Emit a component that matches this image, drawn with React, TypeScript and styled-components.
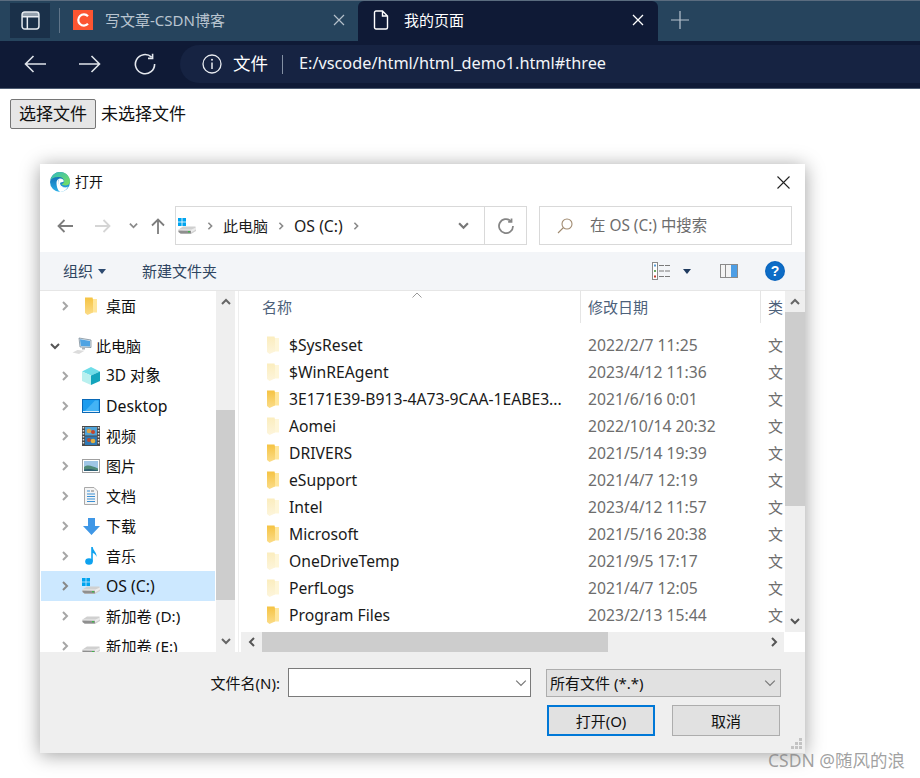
import React from "react";
import styled, { createGlobalStyle } from "styled-components";

const FONT = '"Noto Sans", "Noto Sans CJK SC", sans-serif';

const Global = createGlobalStyle`
  html, body { margin: 0; padding: 0; background: #fff; }
  body { font-family: ${FONT}; overflow: hidden; }
  svg { flex: none; }
`;

const Page = styled.div`
  position: relative;
  width: 920px;
  height: 778px;
  overflow: hidden;
  background: #fff;
`;

/* A fixed line box keeps mixed Latin and CJK labels on one baseline. */
const Label = styled.span<{ $size?: number }>`
  display: block;
  line-height: 20px;
  white-space: nowrap;
  ${(p) => (p.$size ? `font-size: ${p.$size}px;` : "")}
`;

/* ---------- browser chrome ---------- */
const TabStrip = styled.div`
  display: flex;
  align-items: stretch;
  height: 40px;
  background: #26445d;
  border-top: 1px solid #5a6c7f;
`;
const SideToggle = styled.div`
  display: flex;
  align-items: center;
  justify-content: center;
  width: 40px;
  height: 35px;
  margin: 2px 0 0 10px;
  background: #1a3049;
`;
const StripDivider = styled.div`
  width: 1px;
  height: 25px;
  margin: 7px 13px 0 9px;
  background: #5f7488;
`;
const Tab = styled.div<{ $active?: boolean }>`
  display: flex;
  align-items: center;
  box-sizing: border-box;
  width: ${(p) => (p.$active ? "300px" : "285px")};
  padding-left: ${(p) => (p.$active ? "15px" : "0")};
  padding-right: ${(p) => (p.$active ? "14px" : "13px")};
  padding-bottom: 2px;
  background: ${(p) => (p.$active ? "#0f1a36" : "transparent")};
  border-radius: ${(p) => (p.$active ? "6px 6px 0 0" : "0")};
  color: ${(p) => (p.$active ? "#ffffff" : "#b9c5d0")};
  font-size: 15px;
`;
const TabTitle = styled.span`
  flex: 1;
  margin-left: 12px;
  line-height: 20px;
  white-space: nowrap;
`;
const ActiveTitle = styled(TabTitle)`
  margin-left: 15px;
`;
const Favicon = styled.div`
  display: flex;
  align-items: center;
  justify-content: center;
  width: 20px;
  height: 20px;
  background: #fc5531;
`;
const NewTab = styled.div`
  display: flex;
  align-items: center;
  margin-left: 13px;
  padding-bottom: 2px;
`;
const BrowserBar = styled.div`
  display: flex;
  align-items: center;
  box-sizing: border-box;
  height: 48px;
  padding-bottom: 1px;
  background: #0f1a36;
  border-bottom: 1px solid #4d5c72;
`;
const NavButton = styled.div<{ $w: number }>`
  display: flex;
  align-items: center;
  justify-content: center;
  width: ${(p) => p.$w}px;
  margin-bottom: 1px;
`;
const AddressPill = styled.div`
  display: flex;
  align-items: center;
  flex: 1;
  height: 38px;
  padding-left: 22px;
  background: #162342;
  border-radius: 19px 0 0 19px;
  color: #fff;
`;
const SchemeLabel = styled.span`
  margin-left: 11px;
  padding-bottom: 2px;
  font-size: 17.5px;
  line-height: 24px;
`;
const PillDivider = styled.div`
  width: 1px;
  height: 19px;
  margin: 0 16px 0 14px;
  background: #8390a3;
`;
const UrlText = styled.span`
  padding-bottom: 2px;
  font-size: 16.3px;
  line-height: 24px;
  white-space: nowrap;
  color: #f2f5f9;
`;

/* ---------- page content ---------- */
const FileRow = styled.div`
  display: flex;
  align-items: center;
  padding: 10px 0 0 10px;
  height: 30px;
`;
const ChooseButton = styled.div`
  display: flex;
  align-items: center;
  justify-content: center;
  box-sizing: border-box;
  width: 86px;
  height: 30px;
  padding-bottom: 3px;
  background: #e6e6e6;
  border: 1px solid #767676;
  border-radius: 2px;
  font-size: 17px;
  color: #111;
`;
const NoFile = styled.span`
  margin-left: 5px;
  padding-bottom: 3px;
  font-size: 17px;
  color: #111;
`;

/* ---------- dialog ---------- */
const Dialog = styled.div`
  position: relative;
  width: 765px;
  height: 589px;
  margin: 35px 0 0 40px;
  display: flex;
  flex-direction: column;
  background: #fff;
  box-shadow: 0 2px 18px rgba(0, 0, 0, 0.38);
  overflow: hidden;
`;
const TitleBar = styled.div`
  display: flex;
  align-items: center;
  height: 36px;
  padding: 0 15px 0 10px;
  flex: none;
`;
const TitleText = styled(Label)`
  flex: 1;
  margin-left: 5px;
  font-size: 14px;
  color: #111;
`;
const NavRow = styled.div`
  display: flex;
  align-items: center;
  height: 39px;
  margin: 6px 0 7px;
  flex: none;
`;
const NavIcon = styled.div<{ $w: number }>`
  display: flex;
  align-items: center;
  justify-content: center;
  width: ${(p) => p.$w}px;
`;
const NavIcons = styled.div`
  display: flex;
  align-items: center;
  width: 135px;
  padding-left: 6px;
  box-sizing: border-box;
`;
const Breadcrumb = styled.div`
  display: flex;
  align-items: center;
  box-sizing: border-box;
  width: 352px;
  height: 39px;
  border: 1px solid #d9d9d9;
  font-size: 15px;
  color: #1c1c1c;
`;
const CrumbTrail = styled.div`
  display: flex;
  align-items: center;
  flex: 1;
  padding-left: 1px;
  gap: 9px;
`;
const CrumbDrop = styled.div`
  display: flex;
  align-items: center;
  justify-content: center;
  width: 36px;
  padding-right: 6px;
  box-sizing: border-box;
`;
const CrumbRefresh = styled.div`
  display: flex;
  align-items: center;
  justify-content: center;
  box-sizing: border-box;
  width: 42px;
  height: 100%;
  border-left: 1px solid #d9d9d9;
`;
const SearchBox = styled.div`
  display: flex;
  align-items: center;
  box-sizing: border-box;
  width: 253px;
  height: 39px;
  margin-left: 12px;
  padding-left: 17px;
  border: 1px solid #d9d9d9;
  font-size: 15.4px;
  color: #6d6d6d;
  gap: 17px;
`;
const CommandBar = styled.div`
  display: flex;
  align-items: center;
  height: 38px;
  padding: 0 11px 0 23px;
  background: #f3f5f8;
  border-bottom: 1px solid #e6e6e6;
  font-size: 15px;
  color: #2f4561;
  flex: none;
`;
const Organize = styled.div`
  display: flex;
  align-items: center;
  gap: 5px;
`;
const NewFolder = styled(Label)`
  flex: 1;
  margin-left: 36px;
`;
const CommandIcons = styled.div`
  display: flex;
  align-items: center;
`;

const Body = styled.div`
  display: flex;
  height: 361px;
  flex: none;
`;
const Tree = styled.div`
  width: 176px;
  overflow: hidden;
  padding: 0 1px;
  box-sizing: border-box;
`;
const TreeRow = styled.div<{ $selected?: boolean; $gap?: boolean }>`
  display: flex;
  align-items: center;
  height: 30px;
  margin-top: ${(p) => (p.$gap ? "10px" : "0")};
  background: ${(p) => (p.$selected ? "#cce8ff" : "transparent")};
  font-size: 15px;
  color: #111;
  white-space: nowrap;
`;
const TreeExpander = styled.div<{ $open?: boolean }>`
  display: flex;
  justify-content: center;
  align-items: center;
  box-sizing: border-box;
  width: ${(p) => (p.$open ? "27px" : "41px")};
  padding-left: ${(p) => (p.$open ? "0" : "7px")};
  flex: none;
`;
const TreeIcon = styled.div<{ $open?: boolean }>`
  display: flex;
  justify-content: center;
  align-items: center;
  width: ${(p) => (p.$open ? "20px" : "18px")};
  margin: ${(p) => (p.$open ? "0 4px" : "0 6px 0 0")};
  flex: none;
`;
const VScroll = styled.div<{ $w: number }>`
  display: flex;
  flex-direction: column;
  width: ${(p) => p.$w}px;
  flex: none;
  background: #efefef;
`;
const ScrollEnd = styled.div<{ $h: number; $nudge?: number }>`
  display: flex;
  align-items: center;
  justify-content: center;
  height: ${(p) => p.$h}px;
  padding-bottom: ${(p) => p.$nudge || 0}px;
  box-sizing: border-box;
  flex: none;
`;
const ScrollThumb = styled.div<{ $h: number; $top: number }>`
  height: ${(p) => p.$h}px;
  margin-top: ${(p) => p.$top}px;
  background: #cdcdcd;
  flex: none;
`;
const ScrollRest = styled.div`
  flex: 1;
`;
const Splitter = styled.div`
  box-sizing: content-box;
  width: 3px;
  margin-right: 2px;
  border-right: 1px solid #eeeeee;
  flex: none;
`;
const Pane = styled.div`
  flex: 1;
  display: flex;
  flex-direction: column;
  min-width: 0;
`;
const PaneMain = styled.div`
  flex: 1;
  display: flex;
  min-height: 0;
`;
const ListArea = styled.div`
  position: relative;
  flex: 1;
  min-width: 0;
  overflow: hidden;
`;
const HeaderRow = styled.div`
  display: flex;
  height: 32px;
  margin-bottom: 9px;
  font-size: 15px;
  color: #4d617a;
`;
const HeaderCell = styled.div<{ $w: number; $sep?: boolean }>`
  display: flex;
  align-items: center;
  box-sizing: border-box;
  width: ${(p) => p.$w}px;
  flex: none;
  padding-left: ${(p) => (p.$sep ? "7px" : "21px")};
  border-right: 1px solid #e5e5e5;
  white-space: nowrap;
`;
const TypeCell = styled.div`
  display: flex;
  align-items: center;
  flex: 1;
  padding-left: 7px;
`;
const SortCaret = styled.div`
  position: absolute;
  left: 171px;
  top: 1px;
  line-height: 0;
`;
const FileLine = styled.div`
  display: flex;
  align-items: center;
  box-sizing: border-box;
  height: 27px;
  padding-bottom: 2px;
  font-size: 15.7px;
  white-space: nowrap;
`;
const FileIconCell = styled.div`
  display: flex;
  align-items: center;
  width: 48px;
  padding-left: 26px;
  box-sizing: border-box;
  flex: none;
`;
const FileName = styled.div`
  width: 299px;
  flex: none;
  color: #1a1a1a;
`;
const FileDate = styled.div`
  width: 180px;
  flex: none;
  color: #6d6d6d;
`;
const FileType = styled.div`
  font-size: 15px;
  color: #6d6d6d;
`;
const HScroll = styled.div`
  display: flex;
  height: 20px;
  flex: none;
`;
const HTrack = styled.div`
  flex: 1;
  display: flex;
  align-items: stretch;
  background: #efefef;
`;
const HEnd = styled.div`
  display: flex;
  align-items: center;
  justify-content: center;
  width: 21px;
  flex: none;
`;
const HThumb = styled.div`
  width: 346px;
  background: #cdcdcd;
`;
const HRest = styled.div`
  flex: 1;
`;
const Corner = styled.div`
  width: 21px;
  flex: none;
`;

const Footer = styled.div`
  flex: 1;
  background: #efefef;
  padding-top: 16px;
  font-size: 15px;
  color: #111;
`;
const FooterLine = styled.div`
  display: flex;
  align-items: center;
  height: 29px;
`;
const NameLabel = styled(Label)`
  width: 240px;
  text-align: right;
  flex: none;
`;
const NameInput = styled.div`
  display: flex;
  align-items: center;
  justify-content: flex-end;
  box-sizing: border-box;
  width: 243px;
  height: 29px;
  margin-left: 8px;
  padding-right: 3px;
  background: #fff;
  border: 1px solid #7a7a7a;
  flex: none;
`;
const TypeSelect = styled.div`
  display: flex;
  align-items: center;
  justify-content: space-between;
  box-sizing: border-box;
  width: 235px;
  height: 28px;
  margin-left: 15px;
  padding: 0 4px 0 3px;
  background: #e1e1e1;
  border: 1px solid #adadad;
  flex: none;
`;
const ButtonLine = styled.div`
  display: flex;
  margin: 8px 0 0 507px;
  gap: 17px;
`;
const DialogButton = styled.div<{ $primary?: boolean }>`
  display: flex;
  align-items: center;
  justify-content: center;
  box-sizing: border-box;
  width: 108px;
  height: 31px;
  background: #e1e1e1;
  border: ${(p) => (p.$primary ? "2px solid #0078d7" : "1px solid #adadad")};
`;
const Grip = styled.div`
  position: absolute;
  right: 2px;
  bottom: 3px;
  line-height: 0;
`;
const Watermark = styled.div`
  position: absolute;
  right: 15px;
  bottom: 6px;
  font-size: 17.5px;
  line-height: 24px;
  color: rgba(125, 125, 125, 0.72);
  white-space: nowrap;
`;

/* ---------- icons ---------- */
const Chevron = ({ dir = "right", c = "#a6a6a6", s = 10, w = 2 }: { dir?: string; c?: string; s?: number; w?: number }) => {
  const d: Record<string, string> = {
    right: "M3 1 L7 5 L3 9",
    left: "M7 1 L3 5 L7 9",
    down: "M1 3 L5 7 L9 3",
    up: "M1 7 L5 3 L9 7",
  };
  return (
    <svg width={s} height={s} viewBox="0 0 10 10">
      <path d={d[dir]} fill="none" stroke={c} strokeWidth={w} />
    </svg>
  );
};
const Line = ({ w, h, d, c, sw = 1.6 }: { w: number; h: number; d: string; c: string; sw?: number }) => (
  <svg width={w} height={h} viewBox={`0 0 ${w} ${h}`}>
    <path d={d} fill="none" stroke={c} strokeWidth={sw} />
  </svg>
);
const PanelIcon = () => (
  <svg width="19" height="19" viewBox="0 0 18 18">
    <rect x="1" y="1" width="16" height="16" rx="2.5" fill="none" stroke="#e7ecf1" strokeWidth="1.4" />
    <path d="M1 5.5H17M6 5.5V17" fill="none" stroke="#e7ecf1" strokeWidth="1.4" />
    <rect x="1" y="1" width="16" height="4.5" fill="#e7ecf1" opacity=".6" />
  </svg>
);
const DocIcon = () => (
  <svg width="16" height="20" viewBox="0 0 16 20">
    <path d="M1.5 2.5a1.5 1.5 0 0 1 1.5-1.5h6.5l5 5v11.5a1.5 1.5 0 0 1-1.5 1.5H3a1.5 1.5 0 0 1-1.5-1.5zM9.5 1v5h5" fill="none" stroke="#fff" strokeWidth="1.4" />
  </svg>
);
const ReloadIcon = ({ s = 22, c = "#e4e8ee", w = 1.6 }: { s?: number; c?: string; w?: number }) => (
  <svg width={s} height={s} viewBox="0 0 22 22">
    <path d="M17.6 4.2A9.6 9.6 0 1 0 20.6 11" fill="none" stroke={c} strokeWidth={w} />
    <path d="M18.6 0.8V5.4H14" fill="none" stroke={c} strokeWidth={w} />
  </svg>
);
const InfoIcon = () => (
  <svg width="20" height="20" viewBox="0 0 20 20">
    <circle cx="10" cy="10" r="9" fill="none" stroke="#e8ebf0" strokeWidth="1.3" />
    <path d="M10 8.5V15" stroke="#e8ebf0" strokeWidth="1.5" />
    <circle cx="10" cy="5.8" r="1" fill="#e8ebf0" />
  </svg>
);
const EdgeLogo = () => (
  <svg width="20" height="20" viewBox="0 0 20 20">
    <defs>
      <linearGradient id="edgeA" x1="0" y1="0" x2="1" y2="1">
        <stop offset="0" stopColor="#2fbbc0" />
        <stop offset="1" stopColor="#7ce05a" />
      </linearGradient>
      <linearGradient id="edgeB" x1="0" y1="0" x2="0" y2="1">
        <stop offset="0" stopColor="#0b5fa8" />
        <stop offset="1" stopColor="#2bb0e8" />
      </linearGradient>
    </defs>
    <circle cx="10" cy="10" r="10" fill="url(#edgeB)" />
    <path d="M0.3 8.500C1.500 3 5.500 0 10 0c5.800 0 10 4.200 10 9.500 0 2.700-2.200 4-4.800 4-2 0-3.200-.6-3.700-1.200 1.500-.4 2.500-1.600 2.500-3 0-2.600-2-4.400-4.800-4.400C5.600 4.900 1.800 5.600 .3 8.500z" fill="url(#edgeA)" />
    <path d="M6.500 10.800c0-2.300 1.300-4 3.200-4.300-.9.800-1.500 1.800-1.500 3 0 3.800 3.400 6 6.600 6 1.200 0 2.400-.3 3.300-.9C16.500 17.800 13.600 20 10.300 20 8 19 6.500 15 6.500 10.800z" fill="#fff" />
    <path d="M9.700 6.500c2.300-.2 4.100 1 4 2.600 0 .8-.7 1.200-1.800 1.200-.9 0-1.600.2-1.800.8-.3 1.500 1.400 4.200 5.200 4.200-3.500 1-7-1.300-7.100-4.800 0-1.700.6-3.100 1.500-4z" fill="#fff" />
  </svg>
);
const DriveIcon = ({ win }: { win?: boolean }) => (
  <svg width="20" height="18" viewBox="0 0 20 18">
    {win && (
      <g fill="#00a4ef">
        <rect x="1" y="1" width="3.6" height="3.6" />
        <rect x="5.400" y="1" width="3.6" height="3.6" />
        <rect x="1" y="5.400" width="3.6" height="3.6" />
        <rect x="5.400" y="5.400" width="3.6" height="3.600" />
      </g>
    )}
    <path d="M1.500 12.500L6 9.500H18.500L19 12.500V14L14 17H4L1.500 15z" fill="#d0d0d0" />
    <path d="M1.500 12.500H14.500L19 10.500V12.500L14 15.500H2z" fill="#ececec" />
    <path d="M1.500 13.500L14 13.700V16.500H3.500L1.500 15z" fill="#8f8f8f" />
    <rect x="11" y="14" width="2" height="1.400" fill="#3fb54a" />
  </svg>
);
const Folder = ({ pale }: { pale?: boolean }) => (
  <svg width="12" height="18" viewBox="0 0 12 18">
    <defs>
      <linearGradient id="folderSolid" x1="0" y1="0" x2="0" y2="1">
        <stop offset="0" stopColor="#f5c343" />
        <stop offset="1" stopColor="#fbdc88" />
      </linearGradient>
      <linearGradient id="folderPale" x1="0" y1="0" x2="0" y2="1">
        <stop offset="0" stopColor="#fbedbe" />
        <stop offset="1" stopColor="#fdf5dc" />
      </linearGradient>
    </defs>
    <path d="M7 2H12V15.500H7z" fill={pale ? "#fef6d8" : "#ffe69a"} />
    <path d="M0 0.500H7.500L8 2.500V15.500L2.500 18L0 16z" fill={pale ? "url(#folderPale)" : "url(#folderSolid)"} />
  </svg>
);
const PcIcon = () => (
  <svg width="20" height="18" viewBox="0 0 20 18">
    <path d="M7 1L19 3V10.500L8 10z" fill="#dfe8ef" stroke="#6d7f8e" strokeWidth=".7" />
    <path d="M8 2.300L18 4V9.500L8.800 9.100z" fill="#4fa3e3" />
    <path d="M0.500 15.500L5.500 13L12.500 13.700L7 17z" fill="#dcdcdc" />
    <path d="M10 10.500H13V12.500H10z" fill="#a8b1b9" />
  </svg>
);
const CubeIcon = () => (
  <svg width="18" height="18" viewBox="0 0 18 18">
    <path d="M9 0L18 4.500L9 8.500L0 4.500z" fill="#6fdde8" />
    <path d="M0 4.500L9 8.500V18L0 14z" fill="#b9f0ef" />
    <path d="M18 4.500L9 8.500V18L18 14z" fill="#12a4bc" />
  </svg>
);
const DesktopIcon = () => (
  <svg width="18" height="14" viewBox="0 0 18 14">
    <rect x="0.500" y="0.500" width="17" height="13" fill="#1c9cee" stroke="#0968b6" />
    <path d="M3 12 L13 1.500H16.500V12z" fill="#44b3f5" />
    <rect x="1" y="12" width="16" height="1" fill="#dff1fd" />
  </svg>
);
const FilmIcon = () => (
  <svg width="18" height="20" viewBox="0 0 18 20">
    <rect width="18" height="20" fill="#4a4a4a" />
    <rect x="3" y="1" width="12" height="8.500" fill="#4fa3d8" />
    <rect x="3" y="10.500" width="12" height="8.500" fill="#2e79b5" />
    <circle cx="7" cy="5" r="2.300" fill="#d9a24a" />
    <circle cx="11" cy="6" r="2" fill="#c2452d" />
    <circle cx="7" cy="14" r="2" fill="#b84a30" />
    <circle cx="11" cy="15" r="2.300" fill="#e0b040" />
    {[1, 4, 7, 10, 13, 16].map((y) => (
      <React.Fragment key={y}>
        <rect x="0.700" y={y} width="1.500" height="1.500" fill="#e4e4e4" />
        <rect x="15.800" y={y} width="1.500" height="1.500" fill="#e4e4e4" />
      </React.Fragment>
    ))}
  </svg>
);
const PictureIcon = () => (
  <svg width="18" height="14" viewBox="0 0 18 14">
    <rect x="0.500" y="0.500" width="17" height="13" fill="#fff" stroke="#a0a0a0" />
    <rect x="2" y="2" width="14" height="10" fill="#9fc6e6" />
    <path d="M2 8C6 5 10 7 16 9.500V12H2z" fill="#4f8a78" />
    <path d="M2 10.500C6 9.500 11 10 16 11.500V12H2z" fill="#2f5f72" />
  </svg>
);
const DocsIcon = () => (
  <svg width="14" height="18" viewBox="0 0 14 18">
    <path d="M0.500 0.500H10L13.500 4V17.500H0.500z" fill="#f4f4f4" stroke="#a9a9a9" />
    <path d="M3 4H6M3 7H11M3 9.500H11M3 12H11M3 14.500H11" stroke="#3a8fd4" strokeWidth="1" />
    <path d="M7 4H10" stroke="#7a7a7a" strokeWidth="1" />
  </svg>
);
const DownIcon = () => (
  <svg width="17" height="17" viewBox="0 0 17 17">
    <path d="M5 0H12V8H17L8.500 17L0 8H5z" fill="#3f97e6" />
  </svg>
);
const MusicIcon = () => (
  <svg width="12" height="18" viewBox="0 0 12 18">
    <ellipse cx="4" cy="14.500" rx="3.800" ry="3.200" fill="#0ea2ef" />
    <path d="M6.200 0H7.800C8 4 12 5 11.500 10C11 8 9.500 6.500 7.800 6V14.500H6.200z" fill="#0ea2ef" />
  </svg>
);
const ListIcon = () => (
  <svg width="20" height="18" viewBox="0 0 20 18">
    <rect x="0.500" y="0.500" width="5" height="17" fill="#fff" stroke="#8a8a8a" />
    <rect x="2" y="2.500" width="2" height="2" fill="#5a9bd4" />
    <rect x="2" y="8" width="2" height="2" fill="#6aaa64" />
    <rect x="2" y="13.500" width="2" height="2" fill="#c0392b" />
    <path d="M7 3.500H12M13 3.500H18M7 9H12M13 9H18M7 14.500H12M13 14.500H18" stroke="#7a7a7a" strokeWidth="1" />
  </svg>
);
const PreviewIcon = () => (
  <svg width="18" height="14" viewBox="0 0 18 14">
    <rect x="0.500" y="0.500" width="17" height="13" fill="#f4f4f4" stroke="#8b8b8b" />
    <rect x="5" y="1" width="1" height="12" fill="#8b8b8b" />
    <rect x="11" y="1" width="6" height="12" fill="#4d9ee5" />
  </svg>
);
const HelpIcon = () => (
  <svg width="20" height="20" viewBox="0 0 20 20">
    <circle cx="10" cy="10" r="10" fill="#0a64bd" />
    <circle cx="10" cy="10" r="9" fill="#0d6cc6" />
    <text x="10" y="15" textAnchor="middle" fontFamily="Liberation Sans, sans-serif" fontWeight="700" fontSize="14" fill="#fff">?</text>
  </svg>
);
const Caret = ({ c = "#2d4a70" }: { c?: string }) => (
  <svg width="8" height="5" viewBox="0 0 8 5">
    <path d="M0 0H8L4 5z" fill={c} />
  </svg>
);
const GripDots = () => (
  <svg width="12" height="12" viewBox="0 0 12 12" fill="#c3c3c3">
    {[[8, 0], [4, 4], [8, 4], [0, 8], [4, 8], [8, 8]].map(([x, y]) => (
      <rect key={`${x}-${y}`} x={x} y={y} width="3" height="3" />
    ))}
  </svg>
);

/* ---------- data ---------- */
type TreeItem = { label: string; icon: React.ReactNode; selected?: boolean; size?: number };
const treeItems: TreeItem[] = [
  { label: "3D 对象", icon: <CubeIcon />, size: 15.4 },
  { label: "Desktop", icon: <DesktopIcon />, size: 15.8 },
  { label: "视频", icon: <FilmIcon /> },
  { label: "图片", icon: <PictureIcon /> },
  { label: "文档", icon: <DocsIcon /> },
  { label: "下载", icon: <DownIcon /> },
  { label: "音乐", icon: <MusicIcon /> },
  { label: "OS (C:)", icon: <DriveIcon win />, selected: true, size: 15.8 },
  { label: "新加卷 (D:)", icon: <DriveIcon />, size: 15.3 },
  { label: "新加卷 (E:)", icon: <DriveIcon />, size: 15.3 },
];
const files: { name: string; date: string; pale?: boolean }[] = [
  { name: "$SysReset", date: "2022/2/7 11:25", pale: true },
  { name: "$WinREAgent", date: "2023/4/12 11:36", pale: true },
  { name: "3E171E39-B913-4A73-9CAA-1EABE3...", date: "2021/6/16 0:01" },
  { name: "Aomei", date: "2022/10/14 20:32", pale: true },
  { name: "DRIVERS", date: "2021/5/14 19:39" },
  { name: "eSupport", date: "2021/4/7 12:19" },
  { name: "Intel", date: "2023/4/12 11:57", pale: true },
  { name: "Microsoft", date: "2021/5/16 20:38" },
  { name: "OneDriveTemp", date: "2021/9/5 17:17", pale: true },
  { name: "PerfLogs", date: "2021/4/7 12:05", pale: true },
  { name: "Program Files", date: "2023/2/13 15:44" },
];

export default function App() {
  return (
    <Page>
      <Global />
      <TabStrip>
        <SideToggle><PanelIcon /></SideToggle>
        <StripDivider />
        <Tab>
          <Favicon>
            <svg width="14" height="14" viewBox="0 0 14 14">
              <path d="M12 3.200A5.600 5.600 0 1 0 12 10.800" fill="none" stroke="#fff" strokeWidth="2.200" />
            </svg>
          </Favicon>
          <TabTitle>写文章-CSDN博客</TabTitle>
          <Line w={12} h={12} d="M1 1L11 11M11 1L1 11" c="#b4bfca" sw={1.2} />
        </Tab>
        <Tab $active>
          <DocIcon />
          <ActiveTitle>我的页面</ActiveTitle>
          <Line w={12} h={12} d="M1 1L11 11M11 1L1 11" c="#fff" sw={1.3} />
        </Tab>
        <NewTab>
          <Line w={18} h={18} d="M9 0V18M0 9H18" c="#b8c4cf" sw={1.2} />
        </NewTab>
      </TabStrip>
      <BrowserBar>
        <NavButton $w={70}>
          <Line w={22} h={18} d="M22 9H1.500M9.500 1L1.500 9L9.500 17" c="#dfe4ea" />
        </NavButton>
        <NavButton $w={40}>
          <Line w={22} h={18} d="M0 9H20.500M12.500 1L20.500 9L12.500 17" c="#dfe4ea" />
        </NavButton>
        <NavButton $w={70}><ReloadIcon /></NavButton>
        <AddressPill>
          <InfoIcon />
          <SchemeLabel>文件</SchemeLabel>
          <PillDivider />
          <UrlText>E:/vscode/html/html_demo1.html#three</UrlText>
        </AddressPill>
      </BrowserBar>

      <FileRow>
        <ChooseButton>选择文件</ChooseButton>
        <NoFile>未选择文件</NoFile>
      </FileRow>

      <Dialog>
        <TitleBar>
          <EdgeLogo />
          <TitleText>打开</TitleText>
          <Line w={13} h={13} d="M0.500 0.500L12.500 12.500M12.500 0.500L0.500 12.500" c="#222" sw={1.1} />
        </TitleBar>
        <NavRow>
          <NavIcons>
            <NavIcon $w={38}><Line w={16} h={14} d="M16 7H1.500M7.500 1L1.500 7L7.500 13" c="#7d7d7d" sw={1.8} /></NavIcon>
            <NavIcon $w={38}><Line w={16} h={14} d="M0 7H14.500M8.500 1L14.500 7L8.500 13" c="#d5d5d5" sw={1.8} /></NavIcon>
            <NavIcon $w={22}><Chevron dir="down" c="#8a8a8a" s={9} /></NavIcon>
            <NavIcon $w={28}><Line w={14} h={16} d="M7 16V1.500M1 7.500L7 1.500L13 7.500" c="#7d7d7d" sw={1.8} /></NavIcon>
          </NavIcons>
          <Breadcrumb>
            <CrumbTrail>
              <DriveIcon win />
              <Chevron c="#8a8a8a" s={8} />
              <Label>此电脑</Label>
              <Chevron c="#8a8a8a" s={8} />
              <Label $size={15.8}>OS (C:)</Label>
              <Chevron c="#8a8a8a" s={8} />
            </CrumbTrail>
            <CrumbDrop><Chevron dir="down" c="#777" s={11} /></CrumbDrop>
            <CrumbRefresh><ReloadIcon s={16} c="#858585" w={2.400} /></CrumbRefresh>
          </Breadcrumb>
          <SearchBox>
            <Line w={16} h={16} d="M1 15L6.500 9.500M15 6A5 5 0 1 1 5 6A5 5 0 1 1 15 6z" c="#a08a70" sw={1.100} />
            <Label>在 OS (C:) 中搜索</Label>
          </SearchBox>
        </NavRow>
        <CommandBar>
          <Organize><Label>组织</Label> <Caret /></Organize>
          <NewFolder>新建文件夹</NewFolder>
          <CommandIcons>
            <ListIcon />
            <NavIcon $w={30}><Caret c="#1f3a5f" /></NavIcon>
            <NavIcon $w={54}><PreviewIcon /></NavIcon>
            <NavIcon $w={38}><HelpIcon /></NavIcon>
          </CommandIcons>
        </CommandBar>
        <Body>
          <Tree>
            <TreeRow>
              <TreeExpander><Chevron c="#a6a6a6" /></TreeExpander>
              <TreeIcon><Folder /></TreeIcon>
              <Label>桌面</Label>
            </TreeRow>
            <TreeRow $gap>
              <TreeExpander $open><Chevron dir="down" c="#555" /></TreeExpander>
              <TreeIcon $open><PcIcon /></TreeIcon>
              <Label>此电脑</Label>
            </TreeRow>
            {treeItems.map((t) => (
              <TreeRow key={t.label} $selected={t.selected}>
                <TreeExpander><Chevron c={t.selected ? "#888" : "#a6a6a6"} /></TreeExpander>
                <TreeIcon>{t.icon}</TreeIcon>
                <Label $size={t.size}>{t.label}</Label>
              </TreeRow>
            ))}
          </Tree>
          <VScroll $w={19}>
            <ScrollEnd $h={22}><Chevron dir="up" c="#666" s={10} /></ScrollEnd>
            <ScrollThumb $h={190} $top={97} />
            <ScrollRest />
            <ScrollEnd $h={22}><Chevron dir="down" c="#666" s={10} /></ScrollEnd>
          </VScroll>
          <Splitter />
          <Pane>
            <PaneMain>
              <ListArea>
                <SortCaret><Line w={10} h={6} d="M0.500 5.500L5 1L9.500 5.500" c="#9a9a9a" sw={1} /></SortCaret>
                <HeaderRow>
                  <HeaderCell $w={340}><Label>名称</Label></HeaderCell>
                  <HeaderCell $w={180} $sep><Label>修改日期</Label></HeaderCell>
                  <TypeCell><Label>类</Label></TypeCell>
                </HeaderRow>
                {files.map((f) => (
                  <FileLine key={f.name}>
                    <FileIconCell><Folder pale={f.pale} /></FileIconCell>
                    <FileName>{f.name}</FileName>
                    <FileDate>{f.date}</FileDate>
                    <FileType>文</FileType>
                  </FileLine>
                ))}
              </ListArea>
              <VScroll $w={20}>
                <ScrollEnd $h={21}><Chevron dir="up" c="#666" s={10} /></ScrollEnd>
                <ScrollThumb $h={194} $top={0} />
                <ScrollRest />
                <ScrollEnd $h={21} $nudge={2}><Chevron dir="down" c="#555" s={10} /></ScrollEnd>
              </VScroll>
            </PaneMain>
            <HScroll>
              <HTrack>
                <HEnd><Chevron dir="left" c="#555" s={10} /></HEnd>
                <HThumb />
                <HRest />
                <HEnd><Chevron c="#555" s={10} /></HEnd>
              </HTrack>
              <Corner />
            </HScroll>
          </Pane>
        </Body>
        <Footer>
          <FooterLine>
            <NameLabel>文件名(N):</NameLabel>
            <NameInput><Chevron dir="down" c="#777" s={12} w={1} /></NameInput>
            <TypeSelect>
              <Label>所有文件 (*.*)</Label>
              <Chevron dir="down" c="#777" s={12} w={1} />
            </TypeSelect>
          </FooterLine>
          <ButtonLine>
            <DialogButton $primary><Label>打开(O)</Label></DialogButton>
            <DialogButton><Label>取消</Label></DialogButton>
          </ButtonLine>
        </Footer>
        <Grip><GripDots /></Grip>
      </Dialog>
      <Watermark>CSDN @随风的浪</Watermark>
    </Page>
  );
}
